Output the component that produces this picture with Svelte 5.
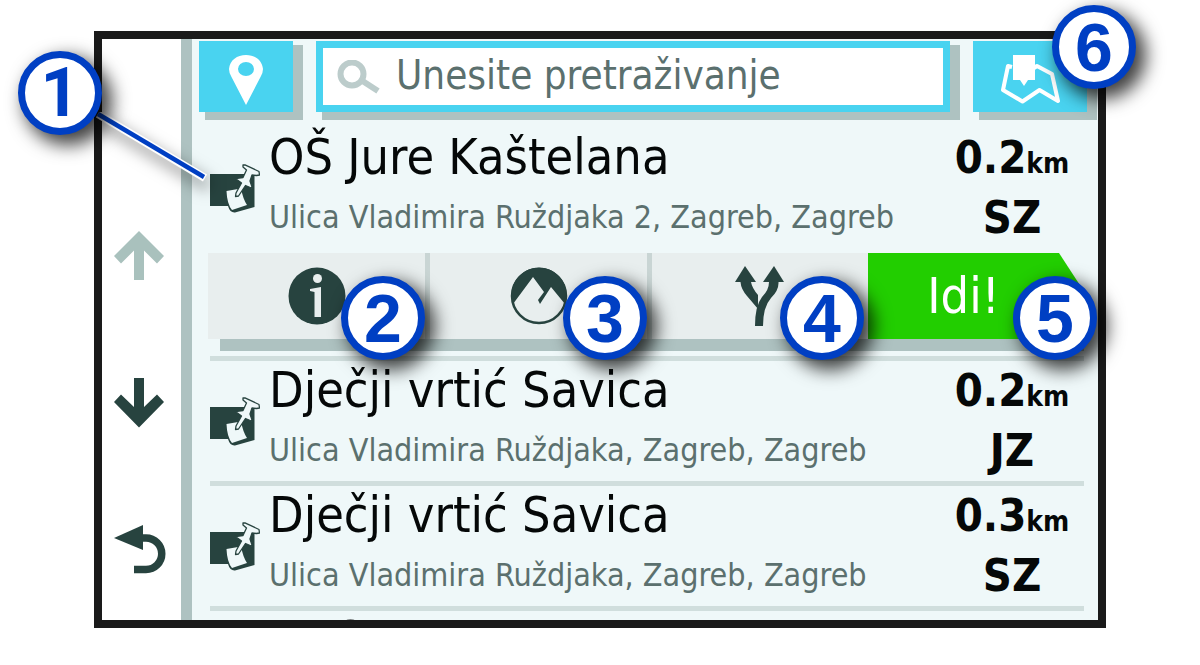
<script lang="ts">
  let query = $state('');

  const results = [
    { name: 'OŠ Jure Kaštelana', address: 'Ulica Vladimira Ruždjaka 2, Zagreb, Zagreb', distance: '0.2', heading: 'SZ' },
    { name: 'Dječji vrtić Savica', address: 'Ulica Vladimira Ruždjaka, Zagreb, Zagreb', distance: '0.2', heading: 'JZ' },
    { name: 'Dječji vrtić Savica', address: 'Ulica Vladimira Ruždjaka, Zagreb, Zagreb', distance: '0.3', heading: 'SZ' }
  ];
</script>

{#snippet noteIcon()}
  <svg class="note" viewBox="0 0 50 49" aria-hidden="true">
    <path d="M0 10H44.500V43L25 48.500Q20 49 18 42H0Z" fill="#27433f" />
    <path d="M16.500 27L31 24.500Q33 35 37 41L22 46Q17 40 16.500 27Z" fill="#eff8f9" />
    <path
      d="M33 1L35 0.800L49 7.500L49.500 11L46.500 11.500L42 11L40 17L42.500 24.500L35.500 21.500L28.500 32L25.500 32.500L26 29L31.500 19L25.500 14.500L33 13.500L36.500 6L33 3Z"
      fill="#eff8f9"
      stroke="#27433f"
      stroke-width="1.3"
      stroke-linejoin="round"
    />
  </svg>
{/snippet}

{#snippet place(item)}
  <div class="place">
    {@render noteIcon()}
    <div class="info">
      <h2>{item.name}</h2>
      <p>{item.address}</p>
    </div>
    <div class="range">
      <span>{item.distance}<small>km</small></span>
      <span>{item.heading}</span>
    </div>
  </div>
{/snippet}

<main class="stage">
  <div class="device">
    <nav>
      <button aria-label="Gore" disabled>
        <svg viewBox="0 0 52 50"><path d="M25 0L50 25L43 32.500L30 19.500V49H20V19.500L7 32.500L0 25Z" fill="#a9c1bd" /></svg>
      </button>
      <button aria-label="Dolje">
        <svg viewBox="0 0 52 50"><path d="M25 49.500L50 24L43 16.500L30 29V0H20V29L7 16.500L0 24Z" fill="#27433f" /></svg>
      </button>
      <button aria-label="Natrag">
        <svg viewBox="0 0 52 50">
          <path d="M0 13L29 0V25Z" fill="#27433f" />
          <path d="M28 13H32A15.500 15.500 0 0 1 32 44.500H20" fill="none" stroke="#27433f" stroke-width="7.500" />
        </svg>
      </button>
    </nav>

    <section class="screen">
      <div class="toolbar">
        <button class="tile" aria-label="Lokacija">
          <svg class="pin" viewBox="0 0 34 50">
            <path d="M17 50L2.500 22Q0 18 0 14C1 5 8 0 17 0S33 5 34 14Q34 18 31.500 22ZM17 7A8 7 0 1 0 17 21A8 7 0 1 0 17 7Z" fill="#fff" fill-rule="evenodd" />
          </svg>
        </button>
        <label class="search">
          <svg viewBox="0 0 43 34" aria-hidden="true">
            <circle cx="15" cy="14" r="11.500" fill="none" stroke="#bccccb" stroke-width="6" />
            <path d="M24 20L41 31" stroke="#bccccb" stroke-width="6" />
          </svg>
          <input type="text" aria-label="Pretraživanje" placeholder="Unesite pretraživanje" bind:value={query} />
        </label>
        <div class="spot">
          <button class="tile wide" aria-label="Karta">
            <svg class="map" viewBox="0 0 60 50">
              <path d="M12 12L8 11L3 35L22.500 46.500L39.500 35L58 46L52 19L37 11L34 13" fill="none" stroke="#fff" stroke-width="4" stroke-linejoin="round" />
              <path d="M13 0H35V25H28L24 31L20 25H13Z" fill="#fff" />
            </svg>
          </button>
          <span class="callout map-callout">6</span>
        </div>
      </div>

      <article class="selected">
        {@render place(results[0])}
        <svg class="leader" viewBox="0 0 112 70" aria-hidden="true">
          <path d="M2 2L109 66" stroke="#fff" stroke-width="8" />
          <path d="M2 2L108 65" stroke="#003fc3" stroke-width="4.500" />
        </svg>
        <span class="callout first-callout">1</span>
      </article>

      <div class="actions">
        <div class="action">
          <button aria-label="Informacije">
            <svg viewBox="0 0 58 58">
              <circle cx="29" cy="29" r="28.500" fill="#27433f" />
              <circle cx="29.500" cy="11.500" r="4.500" fill="#e8eeee" />
              <path d="M22 22L33 20V50H26.500V25L22 24Z" fill="#e8eeee" />
            </svg>
          </button>
          <span class="callout">2</span>
        </div>
        <div class="action">
          <button aria-label="Teren">
            <svg viewBox="0 0 58 58">
              <circle cx="29" cy="29" r="27" fill="#e8eeee" stroke="#27433f" stroke-width="2.500" />
              <path d="M3 37A27.500 27.500 0 1 1 55 37L41 20L30 37L28 33L34 25L23 10Z" fill="#27433f" />
            </svg>
          </button>
          <span class="callout">3</span>
        </div>
        <div class="action">
          <button aria-label="Rute">
            <svg class="fork" viewBox="0 0 50 60">
              <path d="M10 0L21 16H16Q17 22 23 29V43Q18 37 12 30Q6 23 5.500 16H0Z" fill="#27433f" />
              <path d="M39 0L49 16H43.500Q44 24 36 32Q28 41 28 60H20Q20 40 27 31Q34 24 34 16H28Z" fill="#27433f" />
            </svg>
          </button>
          <span class="callout">4</span>
        </div>
        <div class="action go">
          <button>Idi!</button>
          <span class="callout">5</span>
        </div>
      </div>

      <ul>
        {#each results.slice(1) as item}
          <li>{@render place(item)}</li>
        {/each}
        <li class="cut"><h2>DVO</h2></li>
      </ul>
    </section>
  </div>
</main>

<style>
  :global(body) {
    margin: 0;
    background: #fff;
  }

  .stage {
    box-sizing: border-box;
    height: 100vh;
    padding: 31px 94px 37px 94px;
    font-family: 'DejaVu Sans Condensed', 'DejaVu Sans', sans-serif;
    font-stretch: condensed;
    overflow: hidden;
  }

  .device {
    box-sizing: border-box;
    display: flex;
    height: 100%;
    border: 8px solid #1a1a1a;
  }

  button {
    padding: 0;
    border: none;
    background: none;
    font: inherit;
    cursor: pointer;
  }

  svg {
    display: block;
    flex: none;
  }

  nav {
    display: flex;
    flex-direction: column;
    gap: 97px;
    width: 67px;
    padding: 192px 0 0 12px;
    border-right: 11px solid #aec2c1;
  }

  nav svg {
    width: 52px;
    height: 50px;
  }

  .screen {
    flex: 1;
    display: flex;
    flex-direction: column;
    min-width: 0;
    background: #eff8f9;
  }

  .toolbar {
    display: flex;
    gap: 23px;
    padding: 2px 11px 16px 7px;
  }

  .tile {
    display: flex;
    align-items: center;
    justify-content: center;
    width: 94px;
    height: 71px;
    background: #49d3f0;
    box-shadow: 8px 6px 0 2px #aec2c1;
  }

  .wide {
    width: 114px;
  }

  .pin,
  .map {
    width: 34px;
    height: 50px;
    margin-top: 6px;
  }

  .map {
    width: 60px;
  }

  .search {
    box-sizing: border-box;
    flex: 1;
    display: flex;
    align-items: center;
    gap: 16px;
    min-width: 0;
    height: 71px;
    padding-left: 14px;
    border: 7px solid #49d3f0;
    background: #fff;
    box-shadow: 8px 6px 0 2px #aec2c1;
  }

  .search svg {
    width: 43px;
    height: 34px;
  }

  input {
    flex: 1;
    min-width: 0;
    padding: 0 0 4px;
    border: none;
    outline: none;
    background: none;
    color: #5b706e;
    font: inherit;
    font-size: 40px;
  }

  input::placeholder {
    color: #5b706e;
    opacity: 1;
  }

  .spot,
  .selected,
  .action {
    position: relative;
  }

  .place {
    display: flex;
    align-items: center;
  }

  .selected {
    margin: 0 14px 5px 18px;
  }

  .note {
    width: 50px;
    height: 49px;
  }

  .info {
    flex: 1;
    min-width: 0;
    padding-left: 9px;
    white-space: nowrap;
  }

  h2 {
    margin: 0;
    color: #050808;
    font-size: 50px;
    font-weight: normal;
    line-height: 58px;
  }

  p {
    margin: 0;
    color: #5b706e;
    font-size: 32px;
    line-height: 62px;
  }

  .range {
    display: flex;
    flex-direction: column;
    align-items: center;
    width: 144px;
    color: #050808;
    font-size: 45px;
    font-weight: bold;
    line-height: 60px;
  }

  small {
    font-size: 28px;
    line-height: 28px;
  }

  .actions {
    position: relative;
    display: grid;
    grid-template-columns: 222fr 222fr 216fr 219fr;
    height: 86px;
    margin: 0 11px 17px 16px;
    background: #e8eeee;
  }

  .actions::after {
    content: '';
    position: absolute;
    top: 86px;
    left: 12px;
    right: 3px;
    height: 12px;
    background: #aec2c1;
  }

  .action {
    display: flex;
  }

  .action button {
    flex: 1;
    display: flex;
    align-items: center;
    justify-content: center;
  }

  .action:nth-child(-n + 2) {
    border-right: 5px solid #c9d5d4;
  }

  .action svg {
    width: 58px;
    height: 58px;
  }

  .action .fork {
    width: 50px;
    height: 60px;
  }

  .action.go {
    background: #eff8f9;
  }

  .action.go button {
    padding-right: 28px;
    background: #22ce00;
    clip-path: polygon(0 0, calc(100% - 28px) 0, 100% 50%, calc(100% - 28px) 100%, 0 100%);
    color: #fff;
    font-size: 50px;
    line-height: 50px;
  }

  ul {
    flex: 1;
    display: flex;
    flex-direction: column;
    min-height: 0;
    margin: 0 14px 0 18px;
    padding: 0;
    list-style: none;
  }

  li {
    flex: none;
    border-top: 5px solid #d0dedd;
  }

  .cut {
    flex: 1 1 0;
    min-height: 0;
    padding-left: 59px;
    overflow: hidden;
  }

  .cut h2 {
    line-height: 56px;
  }

  .callout {
    position: absolute;
    z-index: 2;
    top: 23px;
    right: 0;
    box-sizing: border-box;
    width: 84px;
    height: 84px;
    border: 7px solid #003fc3;
    border-radius: 50%;
    background: #fff;
    box-shadow: 8px 8px 18px 2px rgba(0, 0, 0, 0.75);
    color: #003fc3;
    font: bold 68px/70px 'Liberation Sans', Arial, sans-serif;
    text-align: center;
  }

  .action:nth-child(3) .callout {
    right: 4px;
  }

  .action.go .callout {
    right: -10px;
  }

  .map-callout {
    top: -36px;
    right: -49px;
  }

  .first-callout {
    top: -77px;
    left: -192px;
    font-family: Roboto, sans-serif;
  }

  .leader {
    position: absolute;
    z-index: 1;
    top: -16px;
    left: -114px;
    width: 112px;
    height: 70px;
    filter: drop-shadow(4px 8px 8px rgba(0, 0, 0, 0.5));
  }
</style>
